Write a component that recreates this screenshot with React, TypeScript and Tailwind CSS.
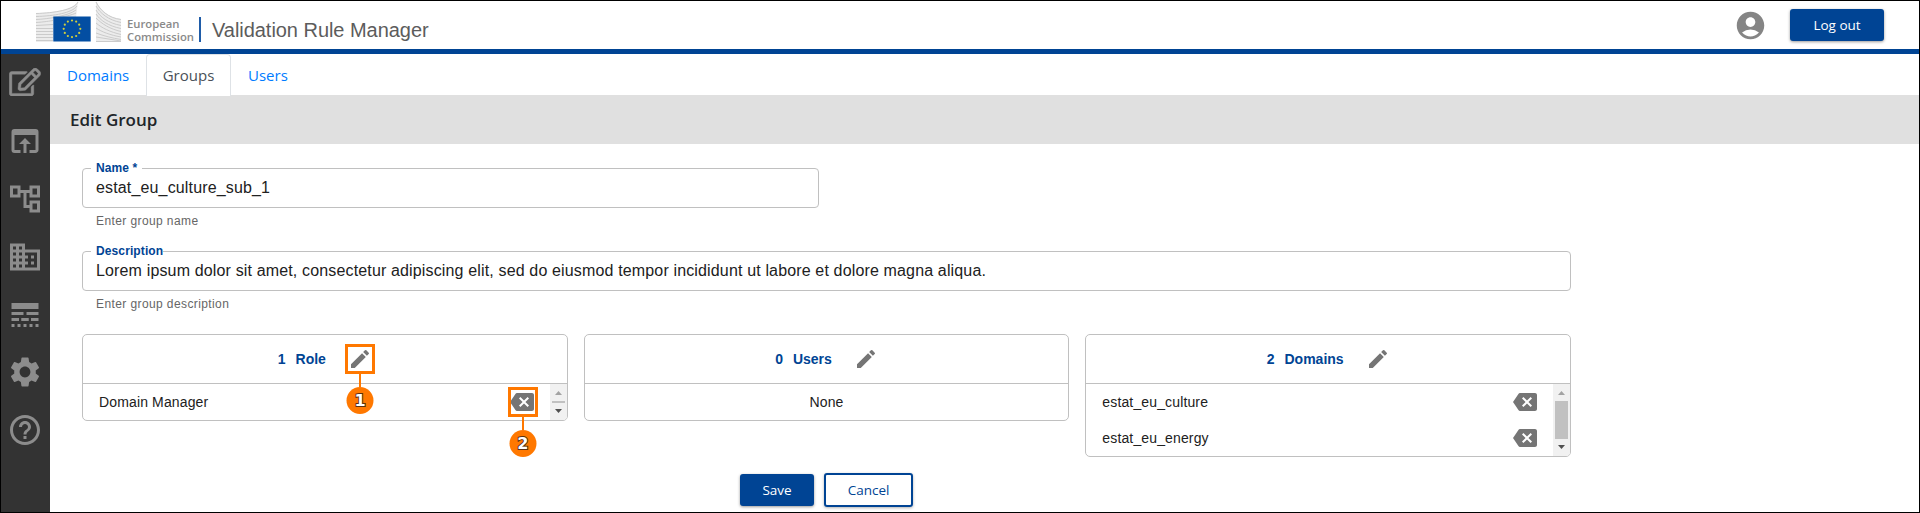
import React from "react";
import {
  MdOpenInBrowser,
  MdOutlineAccountTree,
  MdDomain,
  MdLineStyle,
  MdSettings,
  MdHelpOutline,
  MdAccountCircle,
  MdEdit,
  MdBackspace,
} from "react-icons/md";
import { FaRegEdit } from "react-icons/fa";

function Logo() {
  const stars = Array.from({ length: 12 }, (_, i) => {
    const a = (i * Math.PI) / 6;
    return [36 + 8.3 * Math.sin(a), 27.8 - 8.3 * Math.cos(a)];
  });
  return (
    <svg width="86" height="42" viewBox="0 0 86 42" className="shrink-0">
      <path d="M0 12C18 11.500 38 9 42 0L40 17H17V41H0z" fill="#ececec" />
      <path d="M60 0C64 8 72 16.500 85 18V41H60z" fill="#ececec" />
      <g fill="none" stroke="#cbcbcb" strokeWidth="1">
        <path d="M0 12.5C18 12 38 9 42 1" />
        <path d="M0 15.5C18 15 36 12 41 5" />
        <path d="M0 18.5C12 18 32 15 40 9" />
        <path d="M0 21.5C8 21 14 20 17 19.500M17 17C28 16 36 14 40 12" />
        <path d="M0 24.5L17 23.5" />
        <path d="M0 27.5H17M0 30.5H17M0 33.5H17M0 36.5H17M0 39.5H17" />
        <path d="M60 1C64 9 72 17 85 18.500" />
        <path d="M60 5C64 12 72 19 85 21.500" />
        <path d="M60 9C64 16 72 22 85 24.500" />
        <path d="M60 13C64 19 72 25 85 27.500" />
        <path d="M60 17C66 23 74 28 85 30.500" />
        <path d="M60 22C66 27 74 31 85 33.500" />
        <path d="M60 27C66 31 74 34 85 36" />
        <path d="M60 32C68 35 76 37 85 38.500M60 36L85 40M60 40.500H85" />
      </g>
      <rect x="17.300" y="15.500" width="37.400" height="25" fill="#034ea2" />
      {stars.map(([x, y], i) => (
        <circle key={i} cx={x} cy={y} r="1.100" fill="#d2cf3c" />
      ))}
    </svg>
  );
}

function Field({ label, value, hint, width, notch }: { label: string; value: string; hint: string; width: string; notch: string }) {
  return (
    <div className="h-[83px]">
      <div className={`relative flex h-10 items-center rounded-[4px] border border-[#c0c0c0] px-[13px] ${width}`}>
        <span className={`absolute -top-2 left-2 h-4 bg-white pl-[5px] text-[12px] font-bold leading-[15px] tracking-[0.11px] text-[#004494] ${notch}`}>{label}</span>
        <span className="text-[16px] leading-5 tracking-[0.15px] text-[#212121]">{value}</span>
      </div>
      <p className="pt-[5px] pl-3.5 text-[12px] leading-4 tracking-[0.4px] text-[#666]">{hint}</p>
    </div>
  );
}

function Scrollbar() {
  return (
    <div className="flex w-[17px] flex-col items-center justify-between rounded-br-[4px] bg-[#f1f1f1]">
      <svg width="17" height="17" viewBox="0 0 17 17"><path d="M5 11h7L8.500 7z" fill="#a3a3a3" /></svg>
      <div className="w-[13px] grow bg-[#c1c1c1]" />
      <svg width="17" height="17" viewBox="0 0 17 17"><path d="M5 6h7L8.500 10z" fill="#505050" /></svg>
    </div>
  );
}

function Callout({ n, offset }: { n: number; offset: string }) {
  return (
    <div className={`absolute -top-[3px] z-10 flex w-[30px] flex-col items-center ${offset}`}>
      <div className="h-[30px] w-[30px] border-3 border-[#ff7800]" />
      <div className="h-[13px] w-[2px] bg-[#ff7800]" />
      <svg width="28" height="27" viewBox="0 0 28 27">
        <circle cx="14" cy="13.500" r="13.500" fill="#ff7800" />
        <text x="14" y="19.300" textAnchor="middle" fontFamily="DejaVu Sans" fontWeight="bold" fontSize="16" fill="#fff" stroke="#5a3010" strokeWidth="2" paintOrder="stroke">{n}</text>
      </svg>
    </div>
  );
}

function Card({ count, title, rows, callouts }: { count: number; title: string; rows: string[]; callouts?: boolean }) {
  return (
    <section className="rounded-[5px] border border-[#c0c0c0] text-[14px]">
      <header className="flex h-[49px] items-center justify-center border-b border-[#c0c0c0] font-bold text-[#004494]">
        <span>{count}</span>
        <span className="ml-2.5">{title}</span>
        <span className="relative ml-[22px]">
          <MdEdit className="h-6 w-6 text-[#757575]" />
          {callouts && <Callout n={1} offset="-left-[2.500px]" />}
        </span>
      </header>
      {rows.length === 0 ? (
        <div className="flex h-9 items-center justify-center tracking-[0.14px] text-[#212121]">None</div>
      ) : (
        <div className="flex">
          <ul className="grow">
            {rows.map((r) => (
              <li key={r} className="flex h-9 items-center justify-between px-4 tracking-[0.14px] text-[#212121]">
                {r}
                <span className="relative">
                  <MdBackspace className="h-6 w-6 text-[#757575]" />
                  {callouts && <Callout n={2} offset="-left-[1.500px]" />}
                </span>
              </li>
            ))}
          </ul>
          <Scrollbar />
        </div>
      )}
    </section>
  );
}

const ui = "font-['Open_Sans',sans-serif]";

export default function App() {
  const icon = "h-9 w-9 shrink-0";
  return (
    <div className="flex h-[513px] w-[1920px] flex-col overflow-hidden border border-black bg-white font-['Liberation_Sans',sans-serif]">
      <header className="flex h-[53px] shrink-0 items-start border-b-[5px] border-[#004494] pl-[35px]">
        <Logo />
        <div className="mt-[16px] ml-[5px] w-[68px] font-['Open_Sans',sans-serif] text-[11.300px] font-semibold leading-[13px] text-[#8a8a8a]">
          European
          <br />
          Commission
        </div>
        <div className="mt-4 ml-[4px] h-[25px] w-[2px] bg-[#1f5ca8]" />
        <h1 className="mt-3 ml-[11px] text-[20px] leading-[34px] tracking-[-0.04px] text-[#5c5c5c]">Validation Rule Manager</h1>
        <MdAccountCircle className="mt-[7.500px] mr-px ml-auto h-[33px] w-[33px] text-[#858585]" />
        <button className={`mt-2 mr-[35px] ml-[22px] h-8 w-[94px] rounded-[3px] bg-[#004494] text-[13.500px] text-white shadow-[0_1px_3px_rgba(0,0,0,0.4)] ${ui}`}>Log out</button>
      </header>
      <div className="flex grow">
        <nav className="flex w-[49px] shrink-0 flex-col gap-[22px] bg-[#333] pt-[11px] pl-1.5 text-[#8c8c8c]">
          <div className="flex h-9 w-9 items-start justify-center pt-[3px]">
            <FaRegEdit className="h-7 w-8 shrink-0 stroke-current stroke-[8px]" />
          </div>
          <MdOpenInBrowser className={icon} />
          <MdOutlineAccountTree className={icon} />
          <MdDomain className={icon} />
          <MdLineStyle className={icon} />
          <MdSettings className={`-mt-px ${icon}`} />
          <MdHelpOutline className={icon} />
        </nav>
        <main className="grow">
          <div className={`flex h-[41px] text-[15px] leading-[42px] text-[#007bff] ${ui}`}>
            <a className="w-24 pl-[17px]">Domains</a>
            <a className="relative h-[42px] w-[85px] rounded-t-[4px] border border-b-0 border-[#dee2e6] bg-white text-center leading-[40px] text-[#495057]">Groups</a>
            <a className="pl-[17px]">Users</a>
          </div>
          <h2 className={`h-[49px] bg-[#e0e0e0] pl-5 text-[17px] font-semibold leading-[50px] text-[#212529] ${ui}`}>Edit Group</h2>
          <div className="w-[1521px] pt-6 pl-8">
            <Field label="Name *" value="estat_eu_culture_sub_1" hint="Enter group name" width="w-[737px]" notch="w-[51px]" />
            <Field label="Description" value="Lorem ipsum dolor sit amet, consectetur adipiscing elit, sed do eiusmod tempor incididunt ut labore et dolore magna aliqua." hint="Enter group description" width="w-full" notch="" />
            <div className="grid grid-cols-3 items-start gap-4">
              <Card count={1} title="Role" rows={["Domain Manager"]} callouts />
              <Card count={0} title="Users" rows={[]} />
              <Card count={2} title="Domains" rows={["estat_eu_culture", "estat_eu_energy"]} />
            </div>
          </div>
          <div className={`mt-4 ml-[690px] flex items-center gap-2.5 text-[13.500px] ${ui}`}>
            <button className="h-8 w-[74px] rounded-[3px] bg-[#004494] text-white shadow-[0_1px_3px_rgba(0,0,0,0.4)]">Save</button>
            <button className="h-[34px] w-[89px] rounded-[3px] border-2 border-[#004494] text-[#004494] shadow-[0_1px_3px_rgba(0,0,0,0.3)]">Cancel</button>
          </div>
        </main>
      </div>
    </div>
  );
}
